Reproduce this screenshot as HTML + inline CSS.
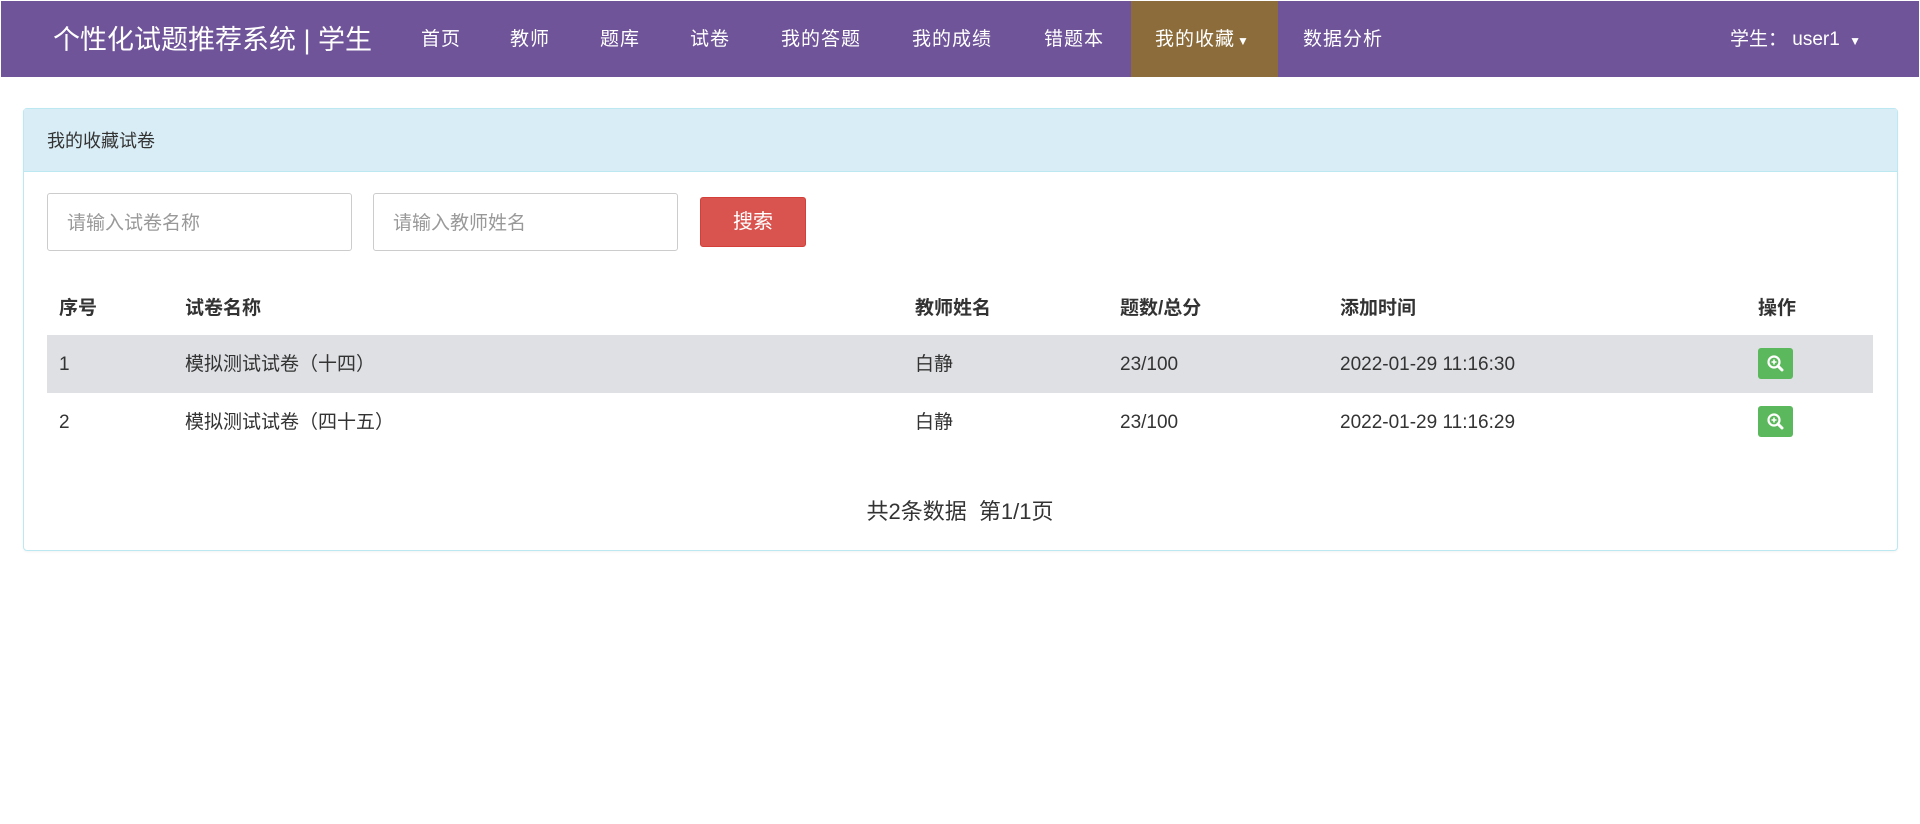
<!DOCTYPE html>
<html><head><meta charset="utf-8"><style>
*{margin:0;padding:0;box-sizing:border-box}
body{width:1920px;height:824px;background:#fff;font-family:"Liberation Sans","Noto Sans CJK SC",sans-serif;color:#333;position:relative;overflow:hidden}
.nav{position:absolute;left:1px;top:1px;width:1918px;height:76px;background:#6f5499}
.a{position:absolute;white-space:nowrap;line-height:26px}
.ni{color:#fff;font-size:19px;top:26px;letter-spacing:1px}
.act{position:absolute;left:1130px;top:0;width:147px;height:76px;background:#8b6c3a}
.panel{position:absolute;left:23px;top:108px;width:1875px;height:443px;border:1px solid #bce8f1;border-radius:4px;box-shadow:0 1px 2px rgba(0,0,0,.05)}
.ph{position:absolute;left:0;top:0;right:0;height:63px;background:#d9edf7;border-bottom:1px solid #bce8f1}
.inp{position:absolute;top:193px;height:58px;width:305px;border:1px solid #ccc;border-radius:3px;color:#999;font-size:19px;padding:17px 0 0 19px;line-height:26px}
.btn{position:absolute;left:700px;top:197px;width:106px;height:50px;background:#d9534f;border:1px solid #d43f3a;border-radius:3px;color:#fff;font-size:20px;text-align:center;line-height:48px}
.th{font-size:19px;font-weight:bold;top:296px;color:#333}
.td{font-size:19px;color:#333}
.g{position:absolute;left:1758px;width:35px;height:31px;background:#5cb85c;border-radius:3px}
</style></head><body>
<div class="nav">
<div class="act"></div>
<div class="a" style="left:52px;top:23px;color:#fff;font-size:27px;line-height:32px">个性化试题推荐系统 | 学生</div>
<div class="a ni" style="left:420px">首页</div>
<div class="a ni" style="left:509px">教师</div>
<div class="a ni" style="left:599px">题库</div>
<div class="a ni" style="left:689px">试卷</div>
<div class="a ni" style="left:780px">我的答题</div>
<div class="a ni" style="left:911px">我的成绩</div>
<div class="a ni" style="left:1043px">错题本</div>
<div class="a ni" style="left:1154px">我的收藏<span style="font-size:12px;margin-left:2px">▼</span></div>
<div class="a ni" style="left:1302px">数据分析</div>
<div class="a ni" style="left:1729px;letter-spacing:0">学生： user1 <span style="font-size:12px;margin-left:4px">▼</span></div>
</div>
<div class="panel"><div class="ph"></div></div>
<div class="a" style="left:47px;top:128px;font-size:18px;color:#333">我的收藏试卷</div>
<div class="inp" style="left:47px">请输入试卷名称</div>
<div class="inp" style="left:373px">请输入教师姓名</div>
<div class="btn">搜索</div>
<div class="a th" style="left:59px">序号</div>
<div class="a th" style="left:185px">试卷名称</div>
<div class="a th" style="left:915px">教师姓名</div>
<div class="a th" style="left:1120px">题数/总分</div>
<div class="a th" style="left:1340px">添加时间</div>
<div class="a th" style="left:1758px">操作</div>
<div class="a" style="left:47px;top:335px;width:1826px;height:58px;background:#dee0e4"></div>
<div class="a td" style="left:59px;top:352px">1</div>
<div class="a td" style="left:185px;top:352px">模拟测试试卷（十四）</div>
<div class="a td" style="left:915px;top:352px">白静</div>
<div class="a td" style="left:1120px;top:352px">23/100</div>
<div class="a td" style="left:1340px;top:352px">2022-01-29 11:16:30</div>
<div class="a td" style="left:59px;top:410px">2</div>
<div class="a td" style="left:185px;top:410px">模拟测试试卷（四十五）</div>
<div class="a td" style="left:915px;top:410px">白静</div>
<div class="a td" style="left:1120px;top:410px">23/100</div>
<div class="a td" style="left:1340px;top:410px">2022-01-29 11:16:29</div>
<div class="g" style="top:348px"><svg width="35" height="31" viewBox="0 0 35 31"><circle cx="16" cy="14" r="5.5" fill="none" stroke="#fff" stroke-width="2.2"/><path d="M13.5 14h5M16 11.5v5" stroke="#fff" stroke-width="1.6"/><path d="M20 18l4 4" stroke="#fff" stroke-width="3" stroke-linecap="round"/></svg></div>
<div class="g" style="top:406px"><svg width="35" height="31" viewBox="0 0 35 31"><circle cx="16" cy="14" r="5.5" fill="none" stroke="#fff" stroke-width="2.2"/><path d="M13.5 14h5M16 11.5v5" stroke="#fff" stroke-width="1.6"/><path d="M20 18l4 4" stroke="#fff" stroke-width="3" stroke-linecap="round"/></svg></div>
<div class="a" style="left:0;width:1920px;text-align:center;top:499px;font-size:22px;color:#333">共2条数据&nbsp; 第1/1页</div>
</body></html>
